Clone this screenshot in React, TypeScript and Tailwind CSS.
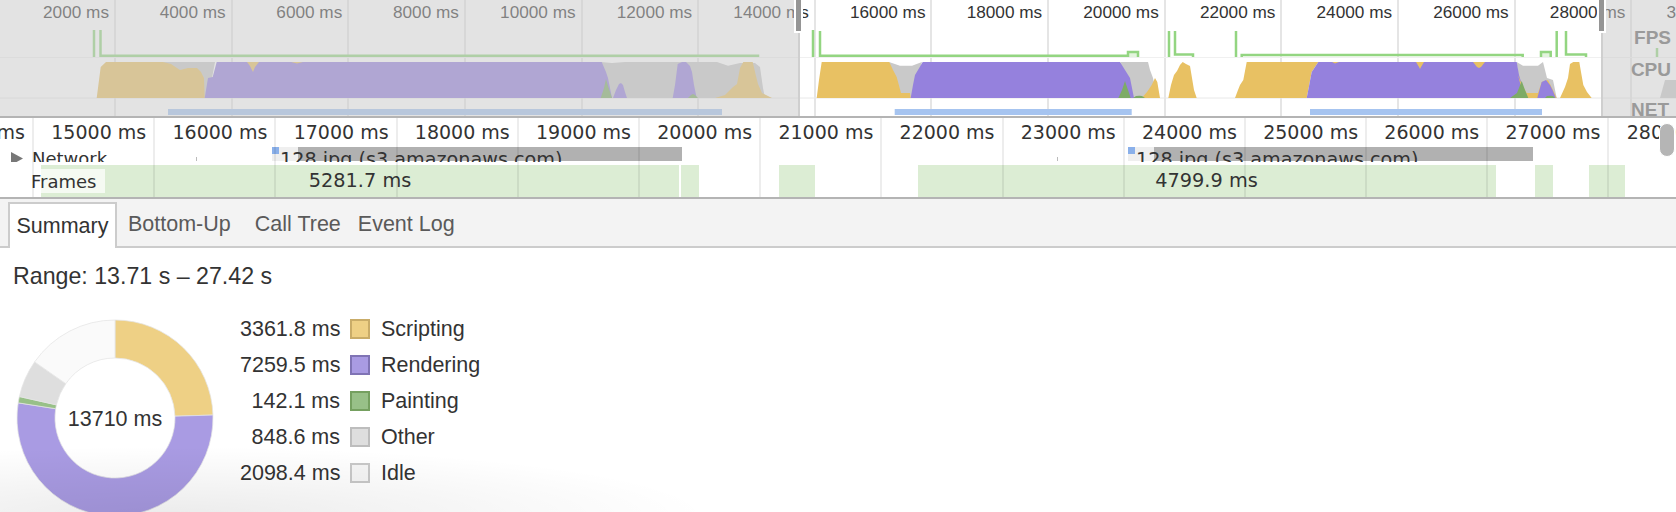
const overviewLabels = ["2000", "4000", "6000", "8000", "10000", "12000", "14000", "16000", "18000", "20000", "22000", "24000", "26000", "28000", "30000"];
const detailLabels = ["14000", "15000", "16000", "17000", "18000", "19000", "20000", "21000", "22000", "23000", "24000", "25000", "26000", "27000", "28000"];

// cpu chart shapes, painted back to front
const GRAY = "#c9c9c9";
const YELLOW = "#e8c163";
const PURPLE = "#9581dd";
const GREEN = "#7dab66";

const cpuShapes: [string, string][] = [
  // first load
  [GRAY, "163,62 215,62 212,78 205,98 190,98"],
  [YELLOW, "96.7,98 100.7,67 106,62 163,62 171,64 180,70 188,68 197,68 201,72 204,78 204.7,98"],
  [GRAY, "601,62 612,63 625,62 717,62 728,65.7 740,63 755,63 760,67 763,88 765,98 606,98"],
  [PURPLE, "204.7,98 208,78 212.7,77 216.7,62 601.7,62 606,72 608,78 612,98"],
  [YELLOW, "247,62 250,66 253,72 255,67 259,62"],
  [YELLOW, "291,62 297,63.5 303,62"],
  [GREEN, "600.7,98 604,88 606,79 608,86 612,98"],
  [PURPLE, "613,98 616,90 619,84 621,83 623,85 625,92 627,98"],
  [PURPLE, "672.7,98 675,85 677.7,64 682,62 686,62 690,66 692,72 694,85 696.7,98"],
  [GREEN, "688,98 691,95 693,94 695,95 698,98"],
  [YELLOW, "715,98 725,95 733,87 737,84 740,68 743.3,62 752.7,62 756,76 758,84 762,93 772,98"],
  // second load
  [GRAY, "889,62 900,65.7 912,65.7 922,62 912,98 900,98"],
  [YELLOW, "816.7,98 819,80 821.7,62 889.3,62 893,70 896.7,77 901,93 910,93 910.7,98"],
  [PURPLE, "910.7,98 913,85 915,75 918,70 922.7,62 1120,62 1128,71 1135,78 1140,90 1145,98"],
  [GRAY, "1120,62 1148,62 1150,70 1153,78 1157,98 1134,98 1130,78"],
  [YELLOW, "1141.7,98 1147,92 1151.7,85 1155,78 1157.3,82 1160,98"],
  [GREEN, "1118.3,98 1122,90 1125,81 1128,90 1130.7,98"],
  [GREEN, "1133,98 1136,96 1139.3,95.7 1142,96 1145,98"],
  [YELLOW, "1168.3,98 1171,85 1174,75 1177,71 1180,65 1182.7,62 1186,64 1190,66 1192,78 1194,90 1196.7,98"],
  [YELLOW, "1235,98 1238,90 1240,85 1243.3,80 1246.7,62 1318.3,62 1311.7,72 1306.7,98"],
  [GRAY, "1516.7,62 1523,65.7 1538,65.7 1543,62 1547,78 1553,80 1556.7,98 1520,98"],
  [PURPLE, "1306.7,98 1311.7,72 1318.3,62 1516.7,62 1519,75 1522,85 1528,98"],
  [YELLOW, "1332,62 1335,63.5 1339,62"],
  [YELLOW, "1416,62 1419,67 1420,69 1421,67 1424,62"],
  [YELLOW, "1473,62 1477,67 1479,68 1481,67 1485,62"],
  [YELLOW, "1518,75 1522,85 1526.7,93 1538,93 1541.7,82 1548,80 1552,88 1556.7,98 1524,98"],
  [PURPLE, "1537.3,98 1540,88 1541.7,82 1546,80 1550,85 1553,91 1555.7,98"],
  [GREEN, "1510,98 1517,93 1521.7,81 1525,90 1528.3,98"],
  [GREEN, "1545,98 1547,96 1550,95.7 1553,96 1555,98"],
  [YELLOW, "1560,98 1565,87 1568,78 1570,64 1573.3,62 1579.3,62 1581,72 1583.3,85 1587,92 1591.7,98"],
  [GRAY, "1660,98 1665,80 1676,80 1676,98"],
];

const fpsLines = [
  "M94 30V57",
  "M100.5 30V55.7H758V57",
  "M813 30V57",
  "M820 31V55.7H1128V52H1138V57",
  "M1169 31V57",
  "M1175 31V54.5H1193V57",
  "M1236 31V57",
  "M1241.7 57V55H1522.7V57",
  "M1541 57V52H1550.7V57",
  "M1556.7 31V57",
  "M1566 31V54.5H1586V57",
  "M1657 48V57",
];

const netBars = [
  [168, 722],
  [894.7, 1131.7],
  [1310, 1542],
];

const summaryRows = [
  { value: "3361.8 ms", label: "Scripting", swatch: "bg-[#eed085] border-[#c9ac68]" },
  { value: "7259.5 ms", label: "Rendering", swatch: "bg-[#a99be3] border-[#8074b5]" },
  { value: "142.1 ms", label: "Painting", swatch: "bg-[#98c088] border-[#75a060]" },
  { value: "848.6 ms", label: "Other", swatch: "bg-[#dedede] border-[#bdbdbd]" },
  { value: "2098.4 ms", label: "Idle", swatch: "bg-[#f5f5f5] border-[#c8c8c8]" },
];

const donutSlices = [
  { share: 3361.8, color: "#eed085" },
  { share: 7259.5, color: "#a99be3" },
  { share: 142.1, color: "#98c088" },
  { share: 848.6, color: "#dedede" },
  { share: 2098.4, color: "#fafafa" },
];

function slicePath(start: number, end: number) {
  const cx = 100;
  const cy = 100;
  const R = 98;
  const r = 60;
  const point = (radius: number, turn: number) => {
    const angle = turn * 2 * Math.PI - Math.PI / 2;
    return `${cx + radius * Math.cos(angle)} ${cy + radius * Math.sin(angle)}`;
  };
  const large = end - start > 0.5 ? 1 : 0;
  return `M${point(R, start)}A${R} ${R} 0 ${large} 1 ${point(R, end)}L${point(r, end)}A${r} ${r} 0 ${large} 0 ${point(r, start)}Z`;
}

function Donut() {
  const total = 13710;
  let turn = 0;
  return (
    <div className="relative h-[200px] w-[200px] shrink-0">
      <svg width="200" height="200" viewBox="0 0 200 200">
        {donutSlices.map((slice) => {
          const start = turn;
          turn += slice.share / total;
          return <path key={slice.color} d={slicePath(start, turn)} fill={slice.color} stroke="#e4e4e4" strokeWidth="0.75" />;
        })}
      </svg>
      <div className="absolute inset-0 flex items-center justify-center pt-[3px] text-[21.5px] text-[#333]">13710 ms</div>
    </div>
  );
}

function Overview() {
  return (
    <div className="relative h-[116px] overflow-hidden bg-white font-['Liberation_Sans',sans-serif] text-[17.2px] text-[#333]">
      <div className="flex h-full">
        {overviewLabels.map((label, i) => (
          <div
            key={label}
            className={`flex shrink-0 justify-end whitespace-nowrap border-r-2 border-[#e5e5e5] pr-[5px] ${i === 0 ? "w-[116px]" : "w-[116.65px]"}`}
          >
            {label} ms
          </div>
        ))}
      </div>

      <svg className="absolute inset-0" width="1676" height="116" viewBox="0 0 1676 116">
        <path d="M0 57.5H1676" stroke="#f0f0f0" strokeWidth="1" />
        <path d="M0 98H1676" stroke="#e8e8e8" strokeWidth="1" />
        <rect x="1129" y="53" width="8" height="4" fill="#e3f4dd" />
        <rect x="1542" y="53" width="8" height="4" fill="#e3f4dd" />
        {fpsLines.map((d) => (
          <path key={d} d={d} fill="none" stroke="#93d581" strokeWidth="2.5" />
        ))}
        {cpuShapes.map(([color, points]) => (
          <polygon key={points} points={points} fill={color} />
        ))}
        {netBars.map(([from, to]) => (
          <rect key={from} x={from} y="109" width={to - from} height="6" fill="#a6c4f0" />
        ))}
      </svg>

      {/* dimmed area outside the selection */}
      <div className="absolute bottom-0 left-0 top-0 w-[800px] border-r-2 border-[#cfcfcf] bg-[rgba(202,202,202,0.52)]" />
      <div className="absolute bottom-0 right-0 top-0 w-[75px] border-l-2 border-[#cfcfcf] bg-[rgba(202,202,202,0.52)]" />

      <div className="absolute left-[794px] top-0 h-[33px] w-[9px] border-x-2 border-b-2 border-white bg-[#959595]" />
      <div className="absolute left-[1597px] top-0 h-[33px] w-[9px] border-x-2 border-b-2 border-white bg-[#959595]" />

      <div className="absolute right-[3px] top-0 text-[19px] font-bold text-[#9a9a9a]">
        <div className="absolute right-[2px] top-[24px]">FPS</div>
        <div className="absolute right-[2px] top-[56px]">CPU</div>
        <div className="absolute right-[4px] top-[96px]">NET</div>
      </div>
    </div>
  );
}

function NetworkBar({ className }: { className: string }) {
  return (
    <div className={`relative flex h-[14px] shrink-0 ${className}`}>
      <div className="w-[26px] bg-[#efefef]" />
      <div className="flex-1 bg-[#b1b1b1]" />
      <div className="absolute left-0 top-0 h-[7px] w-[7px] bg-[#8ab0ea]" />
      <div className="absolute left-[8px] top-[2px] whitespace-nowrap text-[19.2px] leading-[22px] text-[#333]">128.jpg (s3.amazonaws.com)</div>
    </div>
  );
}

function Detail() {
  return (
    <div className="relative h-[83px] overflow-hidden border-y-2 border-[#b4b4b4] bg-white font-['DejaVu_Sans',sans-serif] text-[#333]">
      {/* ruler */}
      <div className="flex h-[29px] items-center text-[19px]">
        {detailLabels.map((label, i) => (
          <div key={label} className={`flex shrink-0 justify-end whitespace-nowrap pr-[9px] ${i === 0 ? "w-[34px]" : "w-[121.2px]"}`}>
            {label} ms
          </div>
        ))}
      </div>

      {/* network row */}
      <div className="flex h-[15px] overflow-hidden pl-[11px]">
        <svg className="mt-[5px] shrink-0" width="13" height="13" viewBox="0 0 13 13">
          <polygon points="0,0 12,6.5 0,13" fill="#777" />
        </svg>
        <div className="ml-[8px] w-[240px] shrink-0 text-[18px] leading-[24px]">Network</div>
        <NetworkBar className="w-[410px]" />
        <NetworkBar className="ml-[446px] w-[405px]" />
      </div>

      {/* frames row */}
      <div className="relative mt-[3px] flex h-[32px]">
        <div className="ml-[41px] flex h-full w-[638px] shrink-0 items-center justify-center bg-[#dcedd4] text-[19.3px]">5281.7 ms</div>
        <div className="ml-[2px] h-full w-[17.5px] shrink-0 bg-[#dcedd4]" />
        <div className="ml-[80px] h-full w-[36px] shrink-0 bg-[#dcedd4]" />
        <div className="ml-[103px] flex h-full w-[578px] shrink-0 items-center justify-center bg-[#dcedd4] text-[19.3px]">4799.9 ms</div>
        <div className="ml-[39px] h-full w-[18.5px] shrink-0 bg-[#dcedd4]" />
        <div className="ml-[36px] h-full w-[35.5px] shrink-0 bg-[#dcedd4]" />
        <div className="absolute left-[31px] top-[4px] flex h-[24px] w-[74px] items-center bg-white/70 text-[18px]">Frames</div>
      </div>

      {/* grid lines on top of the rows */}
      <div className="pointer-events-none absolute inset-0 flex">
        {detailLabels.map((label, i) => (
          <div key={label} className={`h-full shrink-0 border-r-2 border-[rgba(0,0,0,0.07)] ${i === 0 ? "w-[34px]" : "w-[121.2px]"}`} />
        ))}
      </div>

      {/* small request ticks */}
      <div className="absolute left-[196px] top-[39px] h-[4px] w-[1px] bg-[#bbb]" />
      <div className="absolute left-[1057px] top-[39px] h-[4px] w-[1px] bg-[#bbb]" />

      <div className="absolute right-[1px] top-[5px] h-[34px] w-[16px] rounded-full border border-white bg-[#b5b5b5]" />
    </div>
  );
}

function Tabs() {
  return (
    <div className="flex h-[49px] items-end border-b-2 border-[#cccccc] bg-[#f3f3f3] pl-[8px] font-['Liberation_Sans',sans-serif] text-[21.5px] text-[#5a5a5a]">
      <div className="-mb-[2px] flex h-[46px] w-[109px] items-center justify-center border-x-2 border-t-2 border-[#cccccc] bg-white text-[#333]">Summary</div>
      <div className="ml-[11px] flex h-[44px] items-center">Bottom-Up</div>
      <div className="ml-[24px] flex h-[44px] items-center">Call Tree</div>
      <div className="ml-[17px] flex h-[44px] items-center">Event Log</div>
    </div>
  );
}

function Summary() {
  return (
    <div className="pl-[13px] pt-[14px] font-['Liberation_Sans',sans-serif] text-[#333]">
      <div className="text-[23.2px] leading-[28px]">Range: 13.71 s – 27.42 s</div>
      <div className="mt-[28px] flex">
        <div className="ml-[2px]">
          <Donut />
        </div>
        <div className="ml-[25px] flex flex-col gap-[14px] text-[21.5px]">
          {summaryRows.map((row) => (
            <div key={row.label} className="flex h-[22px] items-center">
              <div className="w-[100px] whitespace-nowrap text-right">{row.value}</div>
              <div className={`ml-[10px] h-[20px] w-[20px] border-2 ${row.swatch}`} />
              <div className="ml-[11px]">{row.label}</div>
            </div>
          ))}
        </div>
      </div>
    </div>
  );
}

export default function App() {
  return (
    <div className="relative h-[512px] w-[1676px] overflow-hidden bg-white">
      <Overview />
      <Detail />
      <Tabs />
      <Summary />
      {/* window shadow bleeding in at the bottom left */}
      <div className="pointer-events-none absolute inset-0 bg-[radial-gradient(ellipse_540px_70px_at_170px_516px,rgba(0,0,0,0.08),transparent)]" />
    </div>
  );
}
